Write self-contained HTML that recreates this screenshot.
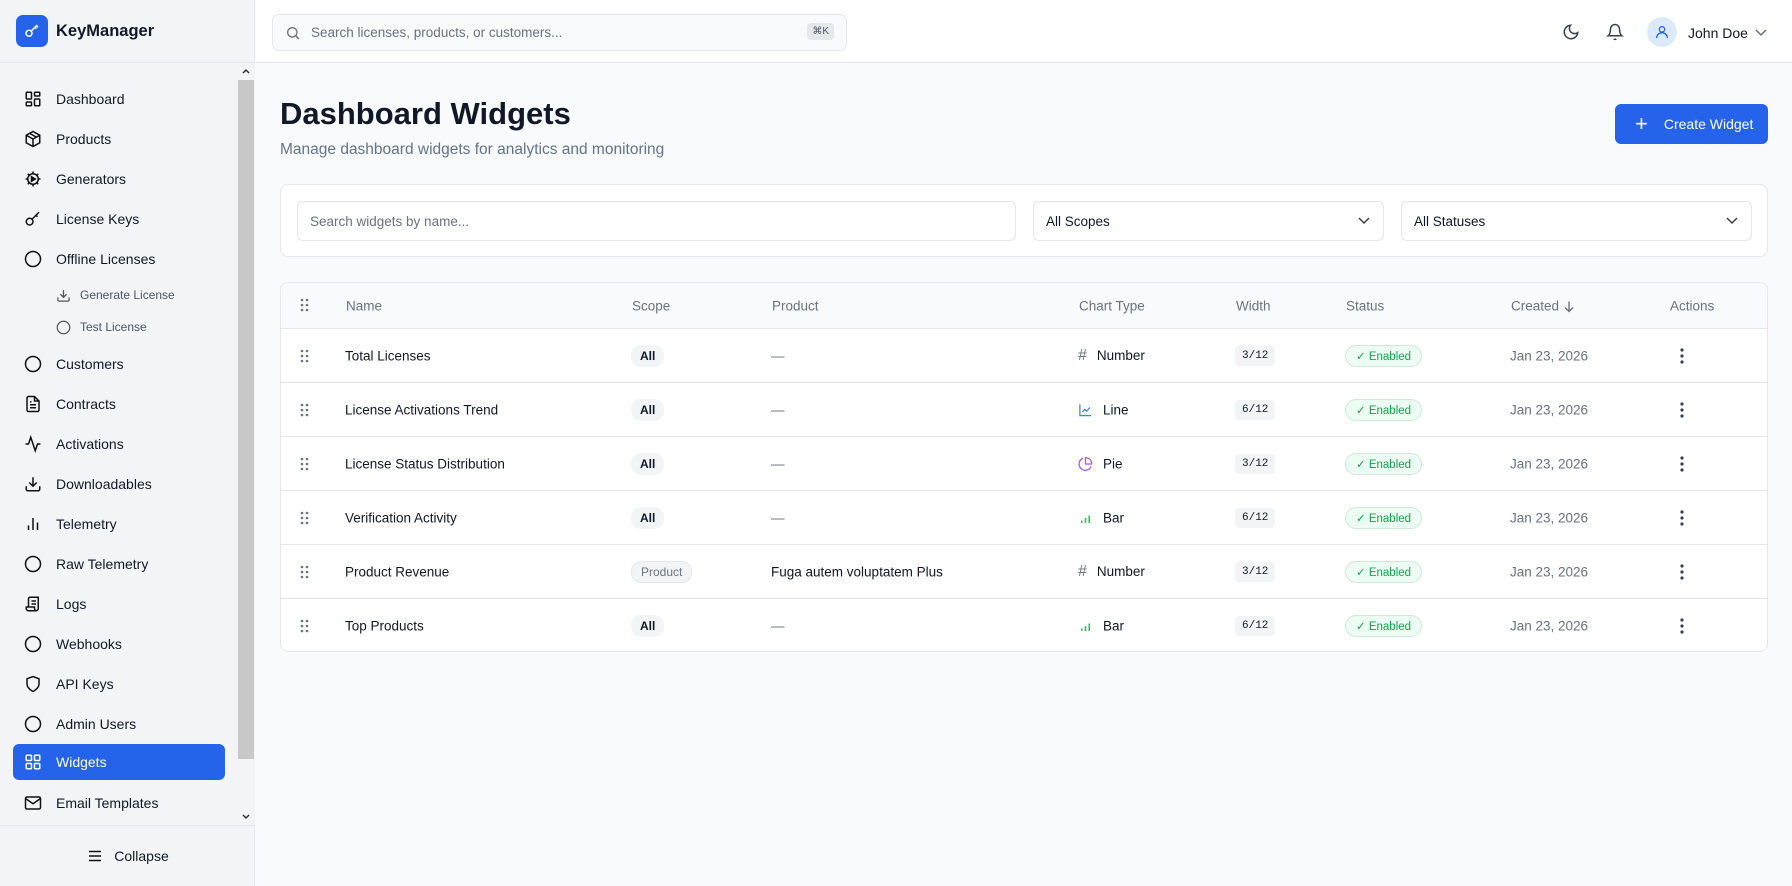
<!DOCTYPE html>
<html><head><meta charset="utf-8"><style>
*{box-sizing:border-box;margin:0;padding:0}
body{width:1792px;height:886px;overflow:hidden;font-family:"Liberation Sans",sans-serif;background:#f9fafb;color:#111827;position:relative}
.sb{position:absolute;left:0;top:0;width:255px;height:886px;background:#f3f4f6;border-right:1px solid #e5e7eb}
.logo{height:63px;border-bottom:1px solid #e5e7eb;display:flex;align-items:center;padding-left:16px}
.logo .b{width:32px;height:32px;background:#2563eb;border-radius:7px;display:flex;align-items:center;justify-content:center}
.logo span{margin-left:8px;font-weight:bold;font-size:16.5px}
.nav{position:absolute;left:0;top:0;width:238px}
.it{position:absolute;left:13px;width:212px;height:36px;display:flex;align-items:center;font-size:14px;color:#111827;border-radius:6px}
.it svg{position:absolute;left:11px}
.it span{position:absolute;left:43px}
.sub{font-size:12px;color:#4b5563}
.sub svg{left:43px}.sub span{left:67px}
.act{background:#2563eb;color:#fff}
.scr{position:absolute;left:238px;top:63px;width:17px;height:762px;background:#f3f4f6}
.thumb{position:absolute;left:238px;top:80px;width:16px;height:679px;background:#c8c8c8}
.col{position:absolute;left:0;top:825px;width:255px;height:61px;border-top:1px solid #e5e7eb;display:flex;align-items:center;justify-content:center;font-size:14px;gap:10px}
.hdr{position:absolute;left:256px;top:0;right:0;height:63px;background:#fff;border-bottom:1px solid #e5e7eb}
.srch{position:absolute;left:16px;top:14px;width:575px;height:37px;border:1px solid #e5e7eb;border-radius:7px;background:#f9fafb;display:flex;align-items:center;font-size:13.5px;color:#6b7280}
.kbd{position:absolute;right:12px;top:8px;font-size:10px;background:#e5e7eb;border-radius:4px;padding:3px 5px;color:#4b5563}
h1{position:absolute;left:280px;top:96px;font-size:31px;font-weight:bold;color:#111827}
.subt{position:absolute;left:280px;top:141px;font-size:15.5px;color:#64748b}
.btn{position:absolute;left:1615px;top:104px;width:153px;height:40px;background:#2563eb;border-radius:6px;color:#fff;font-size:14px;display:flex;align-items:center;padding-left:20px}
.card{position:absolute;left:280px;top:184px;width:1488px;height:73px;background:#fff;border:1px solid #e5e7eb;border-radius:8px}
.inp{position:absolute;top:16px;height:40px;border:1px solid #e5e7eb;border-radius:6px;display:flex;align-items:center;padding-left:12px;font-size:13.5px;color:#111827;background:#fff}
.tbl{position:absolute;left:280px;top:282px;width:1488px;height:370px;background:#fff;border:1px solid #e5e7eb;border-radius:8px;overflow:hidden}
.th{position:absolute;left:0;top:0;width:100%;height:46px;background:#f9fafb;font-size:13.5px;color:#6b7280}
.row{position:absolute;left:0;width:100%;height:54px;border-top:1px solid #e5e7eb;font-size:13.5px;color:#111827}
.c{position:absolute;top:50%;transform:translateY(-50%);white-space:nowrap;display:flex;align-items:center}
.pill{background:#f3f4f6;border-radius:10px;padding:4px 9px;font-size:12px;font-weight:bold}
.pp{background:#f3f4f6;border:1px solid #e5e7eb;border-radius:10px;padding:3px 9px;font-size:12px;color:#6b7280}
.w{background:#f3f4f6;border-radius:4px;padding:4px 7px;font-size:11px;font-family:"Liberation Mono",monospace}
.en{background:#ecfdf3;border:1px solid #d1e7d9;border-radius:11px;padding:3px 10px;font-size:11.5px;color:#16a34a}
.dt{color:#6b7280}
</style></head><body>
<div class="sb">
 <div class="logo"><div class="b"><svg width="18" height="18" viewBox="0 0 24 24" fill="none" stroke="#fff" stroke-width="2"><circle cx="8" cy="15" r="4"/><path d="M11 12l8-8M16 7l2 2M18 5l2 2"/></svg></div><span>KeyManager</span></div>
</div>
<div class="scr"></div><div class="thumb"></div>
<svg style="position:absolute;left:241px;top:67px" width="10" height="8" viewBox="0 0 10 8"><path d="M2 6l3-3 3 3" stroke="#333" stroke-width="1.5" fill="none"/></svg>
<svg style="position:absolute;left:241px;top:813px" width="10" height="8" viewBox="0 0 10 8"><path d="M2 2l3 3 3-3" stroke="#333" stroke-width="1.5" fill="none"/></svg>
<div class="nav">
 <div class="it" style="top:81px"><svg width="18" height="18" viewBox="0 0 24 24" fill="none" stroke="#111" stroke-width="2"><rect x="3" y="3" width="7" height="9" rx="1"/><rect x="14" y="3" width="7" height="5" rx="1"/><rect x="14" y="12" width="7" height="9" rx="1"/><rect x="3" y="16" width="7" height="5" rx="1"/></svg><span>Dashboard</span></div>
 <div class="it" style="top:121px"><svg width="18" height="18" viewBox="0 0 24 24" fill="none" stroke="#111" stroke-width="2"><path d="M12 2l9 5v10l-9 5-9-5V7z M3 7l9 5 9-5 M12 12v10 M7.5 4.5l9 5"/></svg><span>Products</span></div>
 <div class="it" style="top:161px"><svg width="18" height="18" viewBox="0 0 24 24" fill="none" stroke="#111" stroke-width="2"><circle cx="12" cy="12" r="7"/><path d="M12 2v3M12 19v3M2 12h3M19 12h3M5 5l2 2M17 17l2 2M5 19l2-2M17 7l2-2"/><path d="M10 9l5 3-5 3z" fill="#111"/></svg><span>Generators</span></div>
 <div class="it" style="top:201px"><svg width="18" height="18" viewBox="0 0 24 24" fill="none" stroke="#111" stroke-width="2"><circle cx="7.5" cy="15.5" r="4.5"/><path d="M11 12l9-9M16 7l2 2"/></svg><span>License Keys</span></div>
 <div class="it" style="top:241px"><svg width="18" height="18" viewBox="0 0 24 24" fill="none" stroke="#111" stroke-width="2"><circle cx="12" cy="12" r="10"/></svg><span>Offline Licenses</span></div>
 <div class="it sub" style="top:277px"><svg width="15" height="15" viewBox="0 0 24 24" fill="none" stroke="#555" stroke-width="2"><path d="M21 15v4a2 2 0 01-2 2H5a2 2 0 01-2-2v-4M7 10l5 5 5-5M12 15V3"/></svg><span>Generate License</span></div>
 <div class="it sub" style="top:309px"><svg width="15" height="15" viewBox="0 0 24 24" fill="none" stroke="#555" stroke-width="2"><circle cx="12" cy="12" r="10"/></svg><span>Test License</span></div>
 <div class="it" style="top:346px"><svg width="18" height="18" viewBox="0 0 24 24" fill="none" stroke="#111" stroke-width="2"><circle cx="12" cy="12" r="10"/></svg><span>Customers</span></div>
 <div class="it" style="top:386px"><svg width="18" height="18" viewBox="0 0 24 24" fill="none" stroke="#111" stroke-width="2"><path d="M14 2H6a2 2 0 00-2 2v16a2 2 0 002 2h12a2 2 0 002-2V8z M14 2v6h6 M8 13h8 M8 17h8 M8 9h2"/></svg><span>Contracts</span></div>
 <div class="it" style="top:426px"><svg width="18" height="18" viewBox="0 0 24 24" fill="none" stroke="#111" stroke-width="2"><path d="M22 12h-4l-3 9L9 3l-3 9H2"/></svg><span>Activations</span></div>
 <div class="it" style="top:466px"><svg width="18" height="18" viewBox="0 0 24 24" fill="none" stroke="#111" stroke-width="2"><path d="M21 15v4a2 2 0 01-2 2H5a2 2 0 01-2-2v-4M7 10l5 5 5-5M12 15V3"/></svg><span>Downloadables</span></div>
 <div class="it" style="top:506px"><svg width="18" height="18" viewBox="0 0 24 24" fill="none" stroke="#111" stroke-width="2"><path d="M18 20V10M12 20V4M6 20v-6"/></svg><span>Telemetry</span></div>
 <div class="it" style="top:546px"><svg width="18" height="18" viewBox="0 0 24 24" fill="none" stroke="#111" stroke-width="2"><circle cx="12" cy="12" r="10"/></svg><span>Raw Telemetry</span></div>
 <div class="it" style="top:586px"><svg width="18" height="18" viewBox="0 0 24 24" fill="none" stroke="#111" stroke-width="2"><path d="M8 3h11v15a3 3 0 01-3 3H6a3 3 0 01-3-3v-2h11v2a3 3 0 003 3 M8 3a2 2 0 00-2 2v11 M10 8h6M10 12h6"/></svg><span>Logs</span></div>
 <div class="it" style="top:626px"><svg width="18" height="18" viewBox="0 0 24 24" fill="none" stroke="#111" stroke-width="2"><circle cx="12" cy="12" r="10"/></svg><span>Webhooks</span></div>
 <div class="it" style="top:666px"><svg width="18" height="18" viewBox="0 0 24 24" fill="none" stroke="#111" stroke-width="2"><path d="M12 22s8-4 8-10V5l-8-3-8 3v7c0 6 8 10 8 10z"/></svg><span>API Keys</span></div>
 <div class="it" style="top:706px"><svg width="18" height="18" viewBox="0 0 24 24" fill="none" stroke="#111" stroke-width="2"><circle cx="12" cy="12" r="10"/></svg><span>Admin Users</span></div>
 <div class="it act" style="top:744px"><svg width="18" height="18" viewBox="0 0 24 24" fill="none" stroke="#fff" stroke-width="2"><rect x="3" y="3" width="7" height="7" rx="1"/><rect x="14" y="3" width="7" height="7" rx="1"/><rect x="14" y="14" width="7" height="7" rx="1"/><rect x="3" y="14" width="7" height="7" rx="1"/></svg><span>Widgets</span></div>
 <div class="it" style="top:785px"><svg width="18" height="18" viewBox="0 0 24 24" fill="none" stroke="#111" stroke-width="2"><rect x="2" y="4" width="20" height="16" rx="2"/><path d="M22 6l-10 7L2 6"/></svg><span>Email Templates</span></div>
</div>
<div class="col"><svg width="18" height="18" viewBox="0 0 24 24" fill="none" stroke="#111" stroke-width="2"><path d="M4 6h16M4 12h16M4 18h16"/></svg>Collapse</div>

<div class="hdr">
 <div class="srch"><svg style="margin:0 10px 0 12px" width="16" height="16" viewBox="0 0 24 24" fill="none" stroke="#6b7280" stroke-width="2"><circle cx="11" cy="11" r="7"/><path d="M21 21l-5-5"/></svg>Search licenses, products, or customers...<span class="kbd">⌘K</span></div>
 <svg style="position:absolute;left:1306px;top:23px" width="18" height="18" viewBox="0 0 24 24" fill="none" stroke="#374151" stroke-width="2"><path d="M21 12.8A9 9 0 1111.2 3a7 7 0 009.8 9.8z"/></svg>
 <svg style="position:absolute;left:1350px;top:23px" width="18" height="18" viewBox="0 0 24 24" fill="none" stroke="#374151" stroke-width="2"><path d="M18 8a6 6 0 00-12 0c0 7-3 9-3 9h18s-3-2-3-9M13.7 21a2 2 0 01-3.4 0"/></svg>
 <div style="position:absolute;left:1391px;top:17px;width:30px;height:30px;border-radius:50%;background:#dbeafe;display:flex;align-items:center;justify-content:center"><svg width="16" height="16" viewBox="0 0 24 24" fill="none" stroke="#2563eb" stroke-width="2"><circle cx="12" cy="8" r="4"/><path d="M4 21a8 8 0 0116 0"/></svg></div>
 <div style="position:absolute;left:1432px;top:25px;font-size:14px">John Doe</div>
 <svg style="position:absolute;left:1499px;top:28px" width="12" height="10" viewBox="0 0 12 10"><path d="M1 2l5 5 5-5" stroke="#6b7280" stroke-width="1.5" fill="none"/></svg>
</div>

<h1>Dashboard Widgets</h1>
<div class="subt">Manage dashboard widgets for analytics and monitoring</div>
<div class="btn"><span style="font-size:22px;font-weight:300;margin-right:16px;line-height:1">+</span>Create Widget</div>

<div class="card">
 <div class="inp" style="left:16px;width:719px;color:#6b7280">Search widgets by name...</div>
 <div class="inp" style="left:752px;width:351px">All Scopes<svg style="position:absolute;right:12px" width="14" height="10" viewBox="0 0 14 10"><path d="M2 2l5 5 5-5" stroke="#374151" stroke-width="1.5" fill="none"/></svg></div>
 <div class="inp" style="left:1120px;width:351px">All Statuses<svg style="position:absolute;right:12px" width="14" height="10" viewBox="0 0 14 10"><path d="M2 2l5 5 5-5" stroke="#374151" stroke-width="1.5" fill="none"/></svg></div>
</div>

<div class="tbl">
 <div class="th">
  <div class="c" style="left:65px">Name</div><div class="c" style="left:351px">Scope</div><div class="c" style="left:491px">Product</div><div class="c" style="left:798px">Chart Type</div><div class="c" style="left:955px">Width</div><div class="c" style="left:1065px">Status</div><div class="c" style="left:1230px">Created&nbsp;<svg width="12" height="12" viewBox="0 0 12 12"><path d="M6 1v10M2 7l4 4 4-4" stroke="#6b7280" stroke-width="1.4" fill="none"/></svg></div><div class="c" style="left:1389px">Actions</div>
 </div>
</div>
<div style="position:absolute;left:280px;top:282px;width:1488px">
<div class="row" style="top:46px"><div class="c" style="left:20px"><svg width="10" height="14"><g fill="#6b7280"><circle cx="2" cy="2" r="1.3"/><circle cx="7" cy="2" r="1.3"/><circle cx="2" cy="7" r="1.3"/><circle cx="7" cy="7" r="1.3"/><circle cx="2" cy="12" r="1.3"/><circle cx="7" cy="12" r="1.3"/></g></svg></div><div class="c" style="left:65px">Total Licenses</div><div class="c" style="left:351px"><span class="pill">All</span></div><div class="c" style="left:491px;color:#6b7280">—</div><div class="c" style="left:798px"><span style="color:#6b7280;margin-right:10px;font-size:16px">#</span>Number</div><div class="c" style="left:955px"><span class="w">3/12</span></div><div class="c" style="left:1065px"><span class="en">✓ Enabled</span></div><div class="c dt" style="left:1230px">Jan 23, 2026</div><div class="c" style="left:1400px"><svg width="4" height="16"><g fill="#374151"><circle cx="2" cy="2" r="1.6"/><circle cx="2" cy="8" r="1.6"/><circle cx="2" cy="14" r="1.6"/></g></svg></div></div>
<div class="row" style="top:100px"><div class="c" style="left:20px"><svg width="10" height="14"><g fill="#6b7280"><circle cx="2" cy="2" r="1.3"/><circle cx="7" cy="2" r="1.3"/><circle cx="2" cy="7" r="1.3"/><circle cx="7" cy="7" r="1.3"/><circle cx="2" cy="12" r="1.3"/><circle cx="7" cy="12" r="1.3"/></g></svg></div><div class="c" style="left:65px">License Activations Trend</div><div class="c" style="left:351px"><span class="pill">All</span></div><div class="c" style="left:491px;color:#6b7280">—</div><div class="c" style="left:798px"><svg style="margin-right:10px" width="15" height="15" viewBox="0 0 24 24" fill="none" stroke="#3b82f6" stroke-width="2"><path d="M3 3v18h18M7 15l4-4 3 3 5-6"/></svg>Line</div><div class="c" style="left:955px"><span class="w">6/12</span></div><div class="c" style="left:1065px"><span class="en">✓ Enabled</span></div><div class="c dt" style="left:1230px">Jan 23, 2026</div><div class="c" style="left:1400px"><svg width="4" height="16"><g fill="#374151"><circle cx="2" cy="2" r="1.6"/><circle cx="2" cy="8" r="1.6"/><circle cx="2" cy="14" r="1.6"/></g></svg></div></div>
<div class="row" style="top:154px"><div class="c" style="left:20px"><svg width="10" height="14"><g fill="#6b7280"><circle cx="2" cy="2" r="1.3"/><circle cx="7" cy="2" r="1.3"/><circle cx="2" cy="7" r="1.3"/><circle cx="7" cy="7" r="1.3"/><circle cx="2" cy="12" r="1.3"/><circle cx="7" cy="12" r="1.3"/></g></svg></div><div class="c" style="left:65px">License Status Distribution</div><div class="c" style="left:351px"><span class="pill">All</span></div><div class="c" style="left:491px;color:#6b7280">—</div><div class="c" style="left:798px"><svg style="margin-right:10px" width="15" height="15" viewBox="0 0 24 24" fill="none" stroke="#a855f7" stroke-width="2"><path d="M21 15.9A10 10 0 118 2.8M22 12A10 10 0 0012 2v10z"/></svg>Pie</div><div class="c" style="left:955px"><span class="w">3/12</span></div><div class="c" style="left:1065px"><span class="en">✓ Enabled</span></div><div class="c dt" style="left:1230px">Jan 23, 2026</div><div class="c" style="left:1400px"><svg width="4" height="16"><g fill="#374151"><circle cx="2" cy="2" r="1.6"/><circle cx="2" cy="8" r="1.6"/><circle cx="2" cy="14" r="1.6"/></g></svg></div></div>
<div class="row" style="top:208px"><div class="c" style="left:20px"><svg width="10" height="14"><g fill="#6b7280"><circle cx="2" cy="2" r="1.3"/><circle cx="7" cy="2" r="1.3"/><circle cx="2" cy="7" r="1.3"/><circle cx="7" cy="7" r="1.3"/><circle cx="2" cy="12" r="1.3"/><circle cx="7" cy="12" r="1.3"/></g></svg></div><div class="c" style="left:65px">Verification Activity</div><div class="c" style="left:351px"><span class="pill">All</span></div><div class="c" style="left:491px;color:#6b7280">—</div><div class="c" style="left:798px"><svg style="margin-right:10px" width="15" height="15" viewBox="0 0 24 24" fill="none" stroke="#22c55e" stroke-width="2.5"><path d="M18 20V8M12 20V12M6 20v-4"/></svg>Bar</div><div class="c" style="left:955px"><span class="w">6/12</span></div><div class="c" style="left:1065px"><span class="en">✓ Enabled</span></div><div class="c dt" style="left:1230px">Jan 23, 2026</div><div class="c" style="left:1400px"><svg width="4" height="16"><g fill="#374151"><circle cx="2" cy="2" r="1.6"/><circle cx="2" cy="8" r="1.6"/><circle cx="2" cy="14" r="1.6"/></g></svg></div></div>
<div class="row" style="top:262px"><div class="c" style="left:20px"><svg width="10" height="14"><g fill="#6b7280"><circle cx="2" cy="2" r="1.3"/><circle cx="7" cy="2" r="1.3"/><circle cx="2" cy="7" r="1.3"/><circle cx="7" cy="7" r="1.3"/><circle cx="2" cy="12" r="1.3"/><circle cx="7" cy="12" r="1.3"/></g></svg></div><div class="c" style="left:65px">Product Revenue</div><div class="c" style="left:351px"><span class="pp">Product</span></div><div class="c" style="left:491px">Fuga autem voluptatem Plus</div><div class="c" style="left:798px"><span style="color:#6b7280;margin-right:10px;font-size:16px">#</span>Number</div><div class="c" style="left:955px"><span class="w">3/12</span></div><div class="c" style="left:1065px"><span class="en">✓ Enabled</span></div><div class="c dt" style="left:1230px">Jan 23, 2026</div><div class="c" style="left:1400px"><svg width="4" height="16"><g fill="#374151"><circle cx="2" cy="2" r="1.6"/><circle cx="2" cy="8" r="1.6"/><circle cx="2" cy="14" r="1.6"/></g></svg></div></div>
<div class="row" style="top:316px"><div class="c" style="left:20px"><svg width="10" height="14"><g fill="#6b7280"><circle cx="2" cy="2" r="1.3"/><circle cx="7" cy="2" r="1.3"/><circle cx="2" cy="7" r="1.3"/><circle cx="7" cy="7" r="1.3"/><circle cx="2" cy="12" r="1.3"/><circle cx="7" cy="12" r="1.3"/></g></svg></div><div class="c" style="left:65px">Top Products</div><div class="c" style="left:351px"><span class="pill">All</span></div><div class="c" style="left:491px;color:#6b7280">—</div><div class="c" style="left:798px"><svg style="margin-right:10px" width="15" height="15" viewBox="0 0 24 24" fill="none" stroke="#22c55e" stroke-width="2.5"><path d="M18 20V8M12 20V12M6 20v-4"/></svg>Bar</div><div class="c" style="left:955px"><span class="w">6/12</span></div><div class="c" style="left:1065px"><span class="en">✓ Enabled</span></div><div class="c dt" style="left:1230px">Jan 23, 2026</div><div class="c" style="left:1400px"><svg width="4" height="16"><g fill="#374151"><circle cx="2" cy="2" r="1.6"/><circle cx="2" cy="8" r="1.6"/><circle cx="2" cy="14" r="1.6"/></g></svg></div></div>
</div>
<svg style="position:absolute;left:300px;top:298px" width="10" height="14"><g fill="#6b7280"><circle cx="2" cy="2" r="1.3"/><circle cx="7" cy="2" r="1.3"/><circle cx="2" cy="7" r="1.3"/><circle cx="7" cy="7" r="1.3"/><circle cx="2" cy="12" r="1.3"/><circle cx="7" cy="12" r="1.3"/></g></svg>
</body></html>
